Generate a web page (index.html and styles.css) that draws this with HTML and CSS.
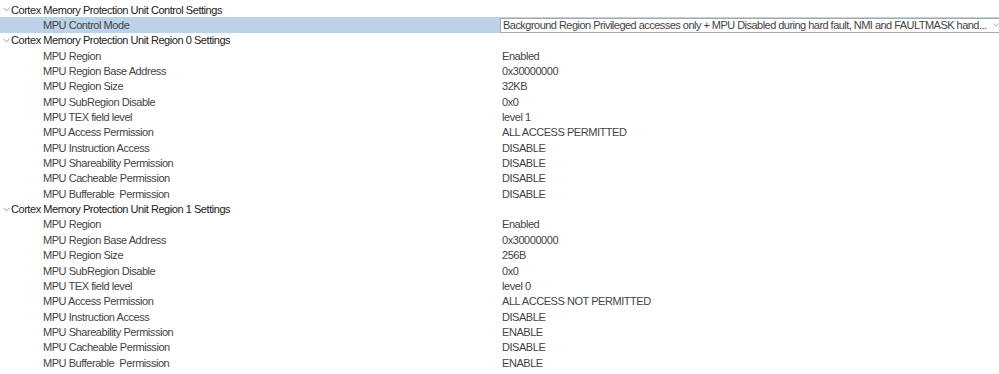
FILE: index.html
```html
<!DOCTYPE html>
<html lang="en">
<head>
    <meta charset="UTF-8">
    <title>MPU Settings</title>
    <link rel="stylesheet" href="styles.css">
</head>
<body>
    <div class="tree">
        <div class="group">
            <div class="row header">
                <svg class="chevron" viewBox="0 0 8 5"><path d="M0.5 0.5L4 4L7.5 0.5" /></svg>
                Cortex Memory Protection Unit Control Settings
            </div>
            <div class="row item selected">
                <span class="label">MPU Control Mode</span>
                <span class="value">
                    <span class="select">
                        <span class="select-text">Background Region Privileged accesses only + MPU Disabled during hard fault, NMI and FAULTMASK hand...</span>
                        <svg class="select-arrow" viewBox="0 0 8 5"><path d="M0.5 0.5L4 4L7.5 0.5" /></svg>
                    </span>
                </span>
            </div>
        </div>

        <div class="group">
            <div class="row header">
                <svg class="chevron" viewBox="0 0 8 5"><path d="M0.5 0.5L4 4L7.5 0.5" /></svg>
                Cortex Memory Protection Unit Region 0 Settings
            </div>
            <div class="row item"><span class="label">MPU Region</span><span class="value">Enabled</span></div>
            <div class="row item"><span class="label">MPU Region Base Address</span><span class="value">0x30000000</span></div>
            <div class="row item"><span class="label">MPU Region Size</span><span class="value">32KB</span></div>
            <div class="row item"><span class="label">MPU SubRegion Disable</span><span class="value">0x0</span></div>
            <div class="row item"><span class="label">MPU TEX field level</span><span class="value">level 1</span></div>
            <div class="row item"><span class="label">MPU Access Permission</span><span class="value">ALL ACCESS PERMITTED</span></div>
            <div class="row item"><span class="label">MPU Instruction Access</span><span class="value">DISABLE</span></div>
            <div class="row item"><span class="label">MPU Shareability Permission</span><span class="value">DISABLE</span></div>
            <div class="row item"><span class="label">MPU Cacheable Permission</span><span class="value">DISABLE</span></div>
            <div class="row item"><span class="label">MPU Bufferable &nbsp;Permission</span><span class="value">DISABLE</span></div>
        </div>

        <div class="group">
            <div class="row header">
                <svg class="chevron" viewBox="0 0 8 5"><path d="M0.5 0.5L4 4L7.5 0.5" /></svg>
                Cortex Memory Protection Unit Region 1 Settings
            </div>
            <div class="row item"><span class="label">MPU Region</span><span class="value">Enabled</span></div>
            <div class="row item"><span class="label">MPU Region Base Address</span><span class="value">0x30000000</span></div>
            <div class="row item"><span class="label">MPU Region Size</span><span class="value">256B</span></div>
            <div class="row item"><span class="label">MPU SubRegion Disable</span><span class="value">0x0</span></div>
            <div class="row item"><span class="label">MPU TEX field level</span><span class="value">level 0</span></div>
            <div class="row item"><span class="label">MPU Access Permission</span><span class="value">ALL ACCESS NOT PERMITTED</span></div>
            <div class="row item"><span class="label">MPU Instruction Access</span><span class="value">DISABLE</span></div>
            <div class="row item"><span class="label">MPU Shareability Permission</span><span class="value">ENABLE</span></div>
            <div class="row item"><span class="label">MPU Cacheable Permission</span><span class="value">DISABLE</span></div>
            <div class="row item"><span class="label">MPU Bufferable &nbsp;Permission</span><span class="value">ENABLE</span></div>
        </div>
    </div>
</body>
</html>
```

FILE: styles.css
```css
:root {
    --text-color: #444444;
    --header-color: #222222;
    --selected-bg: #bcd2e8;
    --select-border: #a8a8a8;
}

* {
    margin: 0;
    padding: 0;
    box-sizing: border-box;
}

body {
    font-family: 'Liberation Sans', Arial, sans-serif;
    font-size: 11px;
    letter-spacing: -0.45px;
    background-color: #ffffff;
    color: var(--text-color);
    padding-top: 2px;
}

.tree {
    display: flex;
    flex-direction: column;
}

.row {
    height: 15.35px;
    display: flex;
    align-items: center;
    white-space: nowrap;
}

.header {
    color: var(--header-color);
    padding-left: 3px;
    gap: 1px;
}

.chevron {
    width: 7px;
    height: 5px;
    fill: none;
    stroke: #8a8a8a;
    stroke-width: 1;
}

.item .label {
    flex-shrink: 0;
    width: 502px;
    padding-left: 43px;
}

.item.selected {
    background-color: var(--selected-bg);
}

.item.selected .label {
    width: 500px;
}

.value {
    flex: 1;
    min-width: 0;
    display: flex;
    align-items: center;
}

.select {
    flex: 1;
    min-width: 0;
    height: 15px;
    display: flex;
    align-items: center;
    justify-content: space-between;
    background-color: #ffffff;
    border: 1px solid var(--select-border);
    border-right: none;
    padding-left: 2px;
}

.select-text {
    letter-spacing: -0.53px;
}

.select-arrow {
    flex-shrink: 0;
    width: 6px;
    height: 4px;
    fill: none;
    stroke: #8a8a8a;
    stroke-width: 1;
}
```
